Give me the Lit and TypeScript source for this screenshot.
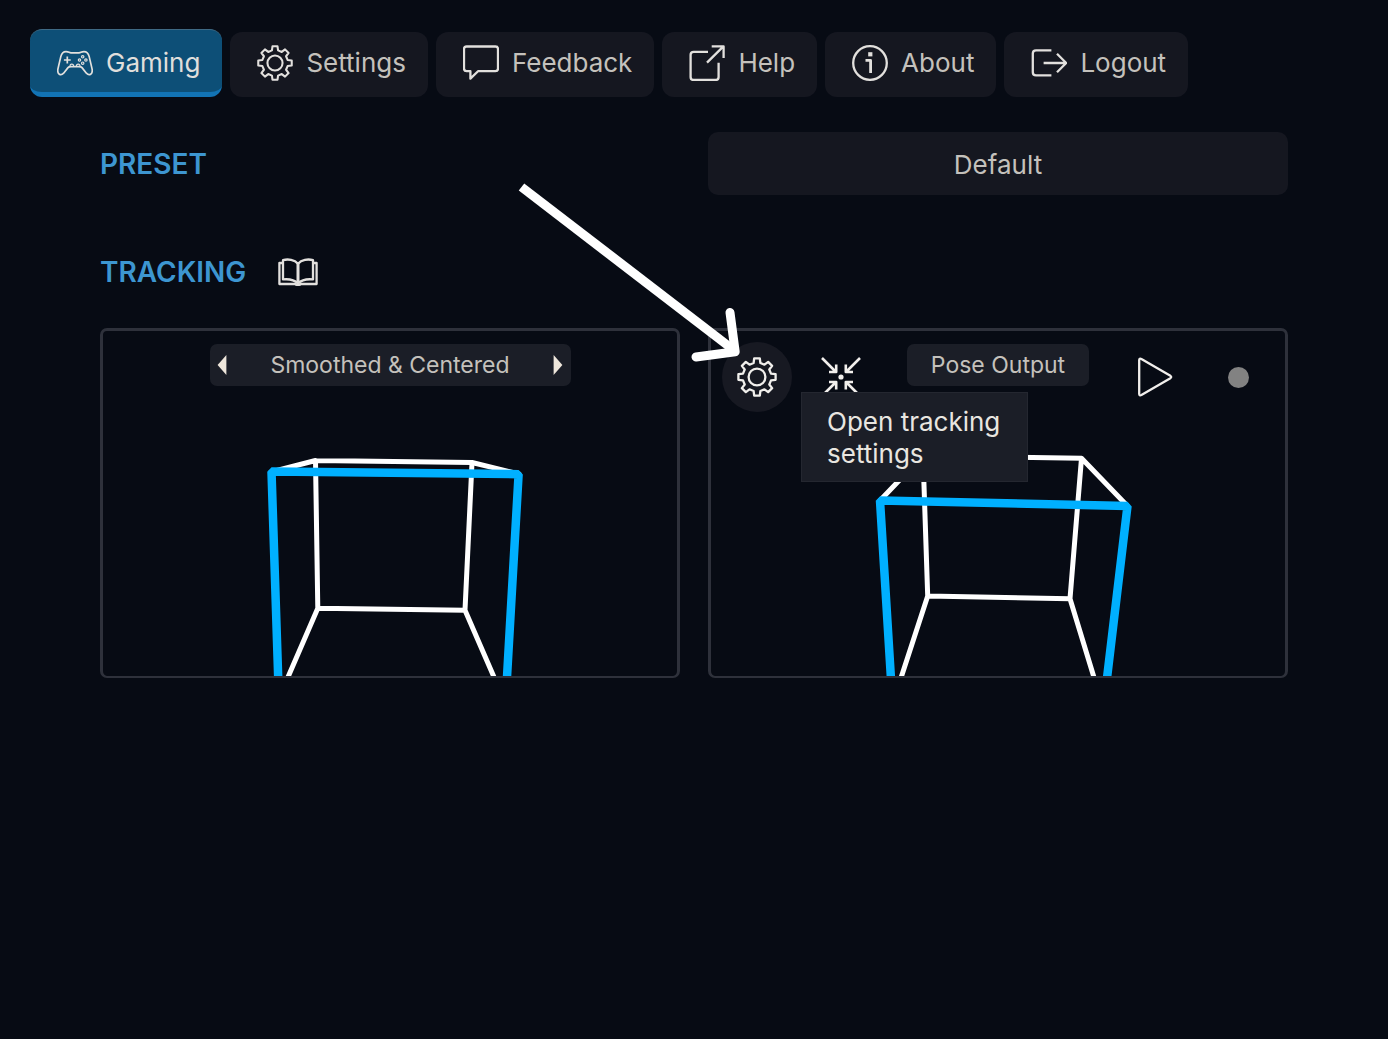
import { LitElement, html, svg, css } from "lit";
import { customElement, property, state } from "lit/decorators.js";
import { classMap } from "lit/directives/class-map.js";

/** Outline of an eight-toothed cog centred on the origin. */
const cogOutline = (): string => {
  const tooth = [[-3.4, -14], [-2.8, -18.6], [2.8, -18.6], [3.4, -14]];
  const points: string[] = [];
  for (let k = 0; k < 8; k++) {
    const a = (k * Math.PI) / 4;
    for (const [x, y] of tooth) {
      const px = x * Math.cos(a) - y * Math.sin(a);
      const py = x * Math.sin(a) + y * Math.cos(a);
      points.push(`${px.toFixed(2)} ${py.toFixed(2)}`);
    }
  }
  return `M${points.join("L")}Z`;
};

const icons: Record<string, { box: string; art: unknown }> = {
  gamepad: {
    box: "0 0 36 36",
    art: svg`
      <g stroke-width="1.7">
        <path d="M9 6.6C12 6.6 12 7.8 14 7.8H22C24 7.8 24 6.6 27 6.6C30 6.6 31.4 8.4 32.2 11.6L35 23.6C36.3 29.6 32 31 29.4 28.2L25 22.6C24.2 21.6 23.4 21.6 22 21.6H14C12.6 21.6 11.8 21.6 11 22.6L6.6 28.2C4 31 -.3 29.6 1 23.6L3.8 11.6C4.6 8.4 6 6.6 9 6.6Z"/>
        <path d="M10.3 11.6V18.4M6.9 15H13.7"/>
        <path d="M13 21C13 18.4 16.6 18.4 16.6 21M19.4 21C19.4 18.4 23 18.4 23 21" stroke-width="1.2"/>
        <g stroke-width="1.2"><circle cx="25.7" cy="11.8" r="1.2"/><circle cx="25.7" cy="18.2" r="1.2"/><circle cx="22.5" cy="15" r="1.2"/><circle cx="28.9" cy="15" r="1.2"/></g>
      </g>`,
  },
  cog: {
    box: "-20 -20 40 40",
    art: svg`<path d=${cogOutline()}/><circle r="8.4"/>`,
  },
  comment: {
    box: "0 0 36 36",
    art: svg`<path d="M3.6 1.5H32.4Q35 1.5 35 4V23.6Q35 26.2 32.4 26.2H15L7.4 33.6V26.2H3.6Q1 26.2 1 23.6V4Q1 1.5 3.6 1.5Z"/>`,
  },
  external: {
    box: "0 0 36 36",
    art: svg`<path d="M19 6.8H4.6Q1.6 6.8 1.6 9.8V32Q1.6 35 4.6 35H26.6Q29.6 35 29.6 32V17.7M18 17.6L34.4 1.4M22.7 1.4H34.6V13"/>`,
  },
  info: {
    box: "0 0 36 36",
    art: svg`<circle cx="18" cy="18" r="16.8"/><path d="M13.5 15.4H18.6V28" stroke-width="2.8"/><rect class="solid" x="16.2" y="7.2" width="4.2" height="4.2"/>`,
  },
  logout: {
    box: "0 0 36 36",
    art: svg`<path d="M20.4 5.4H5Q1.8 5.4 1.8 8.6V27.2Q1.8 30.4 5 30.4H20.4M12.6 18H35M26 8.8L35.2 18L26 27.2"/>`,
  },
  book: {
    box: "0 0 40 28",
    art: svg`<path d="M5 5H1.4V26H17Q20 28 23 26H38.6V5H35"/><path d="M20 5.8C16.6 1.8 10 .6 5 2.2V21.4C11 20.8 16.4 21.8 20 25.4C23.6 21.8 29 20.8 35 21.4V2.2C30 .6 23.4 1.8 20 5.8"/><path d="M20 5V26" stroke-width="3"/>`,
  },
  converge: {
    box: "0 0 40 40",
    art: svg`
      <path stroke-width="2.6" d="M1 1L15 15M8 15H15.2V7.6M39 1L25 15M32 15H24.8V7.6M1 39L15 25M8 25H15.2V32.4M39 39L25 25M32 25H24.8V32.4"/>
      <circle class="solid" cx="20" cy="20" r="2.6"/>`,
  },
  play: {
    box: "0 0 40 40",
    art: svg`<path d="M4.2 3.2V36.8Q4.4 39 6.4 38L35.4 21.2Q37 20 35.4 18.8L6.4 2Q4.4 1 4.2 3.2Z"/>`,
  },
  previous: { box: "0 0 10 20", art: svg`<path class="solid" d="M9 1V19L1 10Z"/>` },
  next: { box: "0 0 10 20", art: svg`<path class="solid" d="M1 1V19L9 10Z"/>` },
};

@customElement("ui-icon")
export class UiIcon extends LitElement {
  @property() name = "cog";

  static styles = css`
    :host { display: block; flex: none; width: 36px; height: 36px; }
    svg {
      display: block; width: 100%; height: 100%;
      fill: none; stroke: currentColor; stroke-width: 2.3; stroke-linejoin: round;
    }
    .solid { fill: currentColor; stroke: none; }
  `;

  render() {
    const icon = icons[this.name];
    return html`<svg viewBox=${icon.box} aria-hidden="true">${icon.art}</svg>`;
  }
}

interface Scene { back: string; front: string; }

const smoothedScene: Scene = {
  back: "M168 141L212.500 129.500L369 131.500L416 143M212.500 129.500L214.800 277.300L362 279.200L369 131.500M214.800 277.300L182 353M362 279.200L394 353",
  front: "M175.400 353L168.500 140.600L415.600 143.200L403.600 353",
};

const poseScene: Scene = {
  back: "M169 169.500L212 124.500L370.500 127.300L416 174.500M212 124.500L216.700 265L359 267.700L370.500 127.300M216.700 265L188 353M359 267.700L385 353",
  front: "M180.300 353L169 169.600L416.500 174.900L395.300 353",
};

@customElement("pose-view")
export class PoseView extends LitElement {
  @property({ attribute: false }) scene: Scene = smoothedScene;

  static styles = css`
    :host { display: block; }
    svg { display: block; width: 100%; height: 100%; fill: none; }
    .back { stroke: #fff; stroke-width: 5; stroke-linejoin: round; stroke-linecap: round; }
    .front { stroke: #00b0ff; stroke-width: 8.5; stroke-linejoin: bevel; }
  `;

  render() {
    return html`<svg viewBox="0 0 574 345" preserveAspectRatio="xMidYMax slice" aria-hidden="true">
      <path class="back" d=${this.scene.back}/>
      <path class="front" d=${this.scene.front}/>
    </svg>`;
  }
}

const tabs = [
  { label: "Gaming", icon: "gamepad" },
  { label: "Settings", icon: "cog" },
  { label: "Feedback", icon: "comment" },
  { label: "Help", icon: "external" },
  { label: "About", icon: "info" },
  { label: "Logout", icon: "logout" },
];

@customElement("app-root")
export class AppRoot extends LitElement {
  @state() private active = "Gaming";

  static styles = css`
    :host {
      display: block; box-sizing: border-box; min-height: 100vh;
      padding: 29px 30px; background: #070b14; color: #c4c1bc;
      font: 400 26px/32px Inter, "Liberation Sans", sans-serif;
    }
    * { box-sizing: border-box; }
    button { margin: 0; border: 0; padding: 0; background: none; color: inherit; font: inherit; cursor: pointer; }
    h2 { margin: 0; color: #3d96d1; font-size: 28px; line-height: 34px; font-weight: 600; }

    .tabs { display: flex; flex-wrap: wrap; align-items: flex-end; gap: 8px; }
    .tab {
      display: flex; align-items: center; gap: 13px; height: 65px;
      padding: 0 22px 3px 27px; border-radius: 12px; background: #151720;
    }
    .tab ui-icon { color: #e2e0dd; }
    .tab.active {
      height: 68px; background: #0d4f77; color: #e0dfdc;
      padding-top: 3px; padding-bottom: 0;
      border-top: 1px solid #3f6a85; border-bottom: 5px solid #1273b4;
    }

    .content { padding: 35px 70px 0; }
    .columns { display: grid; grid-template-columns: 1fr 1fr; gap: 28px; align-items: center; }
    .preset { height: 63px; padding-top: 2px; border-radius: 10px; background: #151720; text-align: center; }
    .title { display: flex; align-items: center; gap: 32px; margin: 60px 0 39px; }
    .title button { color: #e2e0dd; }
    .title ui-icon { width: 40px; height: 28px; }

    .card {
      position: relative; min-height: 350px;
      border: 3px solid #2e313b; border-bottom-width: 2px; border-radius: 7px;
    }
    .scene { position: absolute; inset: 0; }
    .bar {
      position: relative; display: flex; align-items: flex-start; justify-content: center;
      gap: 14px; padding: 11px;
    }
    .chip {
      display: flex; align-items: center; justify-content: center;
      height: 42px; margin: 2px auto 0; padding: 0 24px; border-radius: 7px;
      background: #1b1e27; font-size: 23px; line-height: 28px; white-space: nowrap;
    }
    .chip.picker { width: 361px; justify-content: space-between; padding: 0 6px; }
    .chip ui-icon { width: 12px; height: 22px; color: #efe7dc; }

    .tool {
      display: grid; place-items: center; flex: none; width: 70px; height: 70px;
      border-radius: 50%; color: #f1efec;
    }
    .tool ui-icon { width: 40px; height: 40px; }
    .hovered { background: #171922; }
    .dot { width: 21px; height: 21px; border-radius: 50%; background: #828282; }

    .tooltip {
      position: absolute; left: 90px; top: 61px; width: 227px; padding: 13px 24px 11px 25px;
      border: 1px solid #242730; background: #1b1e27; color: #e9e6e0;
    }
    .pointer {
      position: absolute; left: -201px; top: -151px; width: 240px; height: 190px;
      pointer-events: none; fill: none; stroke: #fff; stroke-width: 9;
    }
  `;

  render() {
    return html`
      <nav class="tabs" aria-label="Main">
        ${tabs.map(
          (t) => html`<button
            class=${classMap({ tab: true, active: t.label === this.active })}
            @click=${() => (this.active = t.label)}
          ><ui-icon name=${t.icon}></ui-icon><span>${t.label}</span></button>`,
        )}
      </nav>
      <main class="content">
        <section class="columns">
          <h2 id="preset">PRESET</h2>
          <button class="preset" aria-describedby="preset">Default</button>
        </section>
        <div class="title">
          <h2>TRACKING</h2>
          <button aria-label="Guide"><ui-icon name="book"></ui-icon></button>
        </div>
        <section class="columns">
          <article class="card">
            <pose-view class="scene" .scene=${smoothedScene}></pose-view>
            <div class="bar">
              <div class="chip picker">
                <button aria-label="Previous"><ui-icon name="previous"></ui-icon></button>
                <span>Smoothed &amp; Centered</span>
                <button aria-label="Next"><ui-icon name="next"></ui-icon></button>
              </div>
            </div>
          </article>
          <article class="card">
            <pose-view class="scene" .scene=${poseScene}></pose-view>
            <div class="bar">
              <button class="tool hovered" aria-label="Tracking" aria-describedby="tip"><ui-icon name="cog"></ui-icon></button>
              <button class="tool" aria-label="Center"><ui-icon name="converge"></ui-icon></button>
              <span class="chip">Pose Output</span>
              <button class="tool" aria-label="Play"><ui-icon name="play"></ui-icon></button>
              <span class="tool"><span class="dot"></span></span>
              <div class="tooltip" id="tip" role="tooltip">Open tracking settings</div>
            </div>
            <svg class="pointer" viewBox="510 180 240 190" aria-hidden="true">
              <path d="M521.500 187L735 351"/>
              <path d="M730 312.500L735.200 351.800L696 357" stroke-linecap="round" stroke-linejoin="round"/>
            </svg>
          </article>
        </section>
      </main>
    `;
  }
}
